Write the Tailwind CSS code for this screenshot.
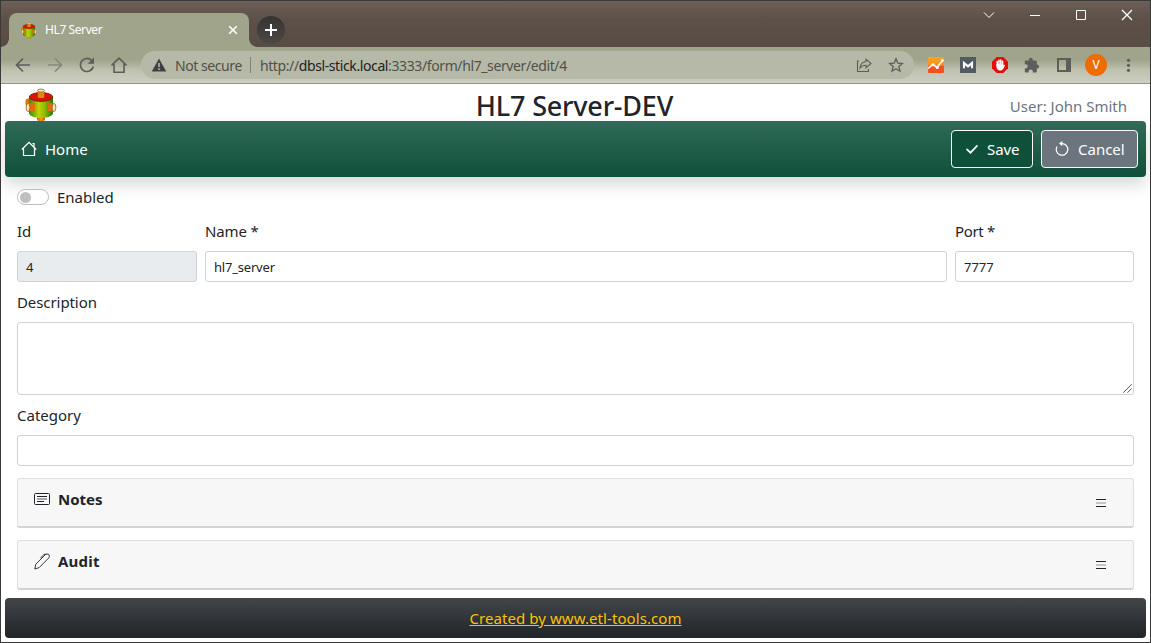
<!DOCTYPE html>
<html lang="en">
<head>
<meta charset="utf-8">
<title>HL7 Server</title>
<script src="https://cdn.jsdelivr.net/npm/@tailwindcss/browser@4"></script>
</head>
<body class="w-[1151px] h-[643px] overflow-hidden bg-white font-['Noto_Sans','Open_Sans',sans-serif] text-[15px] text-[#212529]">
<svg width="0" height="0" class="absolute">
  <defs>
    <linearGradient id="drum"><stop offset="0" stop-color="#348a06"/><stop offset=".4" stop-color="#bfd400"/><stop offset=".65" stop-color="#8fbb08"/><stop offset="1" stop-color="#1c7a08"/></linearGradient>
    <linearGradient id="pipe"><stop offset="0" stop-color="#c96a05"/><stop offset=".5" stop-color="#f0a020"/><stop offset="1" stop-color="#c35a08"/></linearGradient>
    <linearGradient id="ana" x2="0" y2="1"><stop offset="0" stop-color="#f9a51d"/><stop offset=".5" stop-color="#f9901d"/><stop offset=".6" stop-color="#f4511e"/></linearGradient>
    <symbol id="logo" viewBox="0 0 32 34">
      <rect x="12" y="27" width="8" height="6" rx="2" fill="url(#pipe)"/>
      <rect x="0.500" y="10.500" width="6" height="8" rx="2.500" fill="#d9780b"/>
      <path d="M4 9v16c0 2.700 5 5 12 5s12-2.300 12-5V9z" fill="url(#drum)"/>
      <ellipse cx="16" cy="9" rx="11.800" ry="4.400" fill="#dc1405" stroke="#7c1c04" stroke-width=".9"/>
      <rect x="12.800" y="3" width="6.500" height="7" rx="1.500" fill="#dc8a12"/>
      <ellipse cx="16" cy="2.600" rx="3.600" ry="1.500" fill="#f8e7b3" stroke="#8a6a20" stroke-width=".8"/>
      <path d="M3 15.500l7-1v8.500l-7 .5z" fill="#dc6f0c"/>
      <ellipse cx="3" cy="19.500" rx="1.900" ry="4" fill="#f8e7b3" stroke="#8a5a20" stroke-width=".8"/>
      <path d="M23 14.500l6 1v8l-6-.5z" fill="#dc6f0c"/>
      <ellipse cx="29" cy="19.500" rx="1.900" ry="4" fill="#f8e7b3" stroke="#8a5a20" stroke-width=".8"/>
    </symbol>
  </defs>
</svg>
<div class="w-full h-full border border-[#3b3a3a] flex flex-col">

  <!-- Tab strip -->
  <div class="h-[46px] shrink-0 flex items-end justify-between bg-linear-to-b from-[#6b5f58] via-[#5d5049] via-40% to-[#594c45]">
    <div class="flex items-end">
      <div class="size-2 bg-[radial-gradient(circle_at_0_0,#594c45_7.500px,#9fa48b_8px)]"></div>
      <div class="w-[240px] h-[34px] rounded-t-lg bg-[#9fa48b] flex items-center pl-3 pr-[11px]">
        <svg class="w-4 h-[17px]"><use href="#logo"/></svg>
        <span class="ml-2 text-[12px] tracking-[-0.4px] text-white whitespace-nowrap">HL7 Server</span>
        <svg class="ml-auto" width="10" height="10" viewBox="0 0 10 10" stroke="#fff" stroke-width="1.600"><path d="M1.200 1.200l7.600 7.600M8.800 1.200l-7.600 7.600"/></svg>
      </div>
      <div class="size-2 bg-[radial-gradient(circle_at_100%_0,#594c45_7.500px,#9fa48b_8px)]"></div>
      <div class="size-7 mb-[3px] rounded-full bg-linear-to-b from-[#363432] to-[#4b4845] flex items-center justify-center">
        <svg width="12" height="12" viewBox="0 0 12 12" stroke="#fff" stroke-width="2"><path d="M6 0v12M0 6h12"/></svg>
      </div>
    </div>
    <div class="h-full flex items-start pt-2 pr-[17px] gap-[34px]">
      <svg width="12" height="12" viewBox="0 0 12 12" fill="none" stroke="#fff"><path d="M1 3.500l5 5 5-5"/></svg>
      <svg width="12" height="12" viewBox="0 0 12 12" stroke="#fff"><path d="M1 6.500h10"/></svg>
      <svg width="12" height="12" viewBox="0 0 12 12" fill="none" stroke="#fff"><path d="M1.500 1.500h9v9h-9z"/></svg>
      <svg width="12" height="12" viewBox="0 0 12 12" stroke="#fff" stroke-width="1.300"><path d="M1 1l10 10M11 1L1 11"/></svg>
    </div>
  </div>

  <!-- Toolbar -->
  <div class="h-[37px] shrink-0 flex items-center pl-[14px] pr-[15px] border-b border-[#92948a] bg-linear-to-b from-[#9fa48b] from-35% via-[#bfc2b0] via-65% to-[#cdcfc2]">
    <div class="flex gap-4 text-[#5c5e5b]">
      <svg width="16" height="16" viewBox="0 0 16 16" fill="none" stroke="currentColor" stroke-width="1.700"><path d="M15 8H2M8 1.500L1.500 8 8 14.500"/></svg>
      <svg width="16" height="16" viewBox="0 0 16 16" fill="none" stroke="#86897c" stroke-width="1.700"><path d="M1 8h13M8 1.500L14.500 8 8 14.500"/></svg>
      <svg width="16" height="16" viewBox="0 0 16 16" fill="none" stroke="currentColor" stroke-width="1.700"><path d="M14.300 9.500A6.500 6.500 0 1 1 12.600 3.400L14 4.800"/><path d="M15 0.500v6.300H8.700z" fill="currentColor" stroke="none"/></svg>
      <svg width="16" height="16" viewBox="0 0 16 16" fill="none" stroke="currentColor" stroke-width="1.600"><path d="M.5 8.500L8 1.200l7.500 7.300M3 7v8.200h10V7"/></svg>
    </div>
    <div class="ml-[14px] w-[773px] h-7 rounded-full bg-[#b6b9a7] flex items-center pl-[10px] pr-[10px] text-[14px] text-[#4f514a]">
      <svg width="16" height="14" viewBox="0 0 16 14"><path d="M8 0.500l7.300 13H.7z" fill="#3f4144"/><path d="M8 5v4M8 10.300v1.700" stroke="#b6b9a7" stroke-width="1.600"/></svg>
      <span class="ml-2 tracking-[-0.43px] whitespace-nowrap">Not secure</span>
      <span class="ml-2 w-px h-4 bg-[#7e8175]"></span>
      <span class="ml-[9px] tracking-[-0.39px] whitespace-nowrap">http://<span class="text-[#222]">dbsl-stick.local</span>:3333/form/hl7_server/edit/4</span>
      <svg class="ml-auto" width="16" height="16" viewBox="0 0 16 16" fill="none" stroke="#5c5e5b" stroke-width="1.100"><path d="M3 4H1.500v10.500h11V12"/><path d="M10 2.200L15 6.500l-5 4.200V8.300C7.500 8.300 5.500 9 4 11c.3-3.500 2.300-6 6-6.500z"/></svg>
      <svg class="ml-4" width="16" height="16" viewBox="0 0 16 16" fill="none" stroke="#5c5e5b" stroke-width="1.300"><path d="M8 1.800l1.800 4.300 4.700.4-3.600 3.100 1.100 4.600L8 11.700l-4 2.500 1.100-4.600-3.600-3.100 4.700-.4z"/></svg>
    </div>
    <div class="ml-[14px] flex items-center gap-4">
      <svg width="16" height="16" viewBox="0 0 16 16"><rect width="16" height="16" rx="1" fill="url(#ana)"/><path d="M0 11.500L5 7.500l4 3L15 3" fill="none" stroke="#fff" stroke-width="1.600"/><g fill="#fff"><circle cx="5" cy="7.800" r="1.500"/><circle cx="9.300" cy="10.500" r="1.500"/><circle cx="14.300" cy="3.500" r="1.500"/></g></svg>
      <svg width="16" height="16" viewBox="0 0 16 16"><rect width="16" height="16" fill="#515c60"/><path d="M4 11.200V6l4 3.300L12 6v5.200" fill="none" stroke="#fff" stroke-width="2.100"/></svg>
      <svg width="16" height="16" viewBox="0 0 16 16"><path d="M4.700 0h6.600L16 4.700v6.600L11.300 16H4.700L0 11.300V4.700z" fill="#e40d0d"/><path d="M5.200 8.500V4.500M7 8V3.200M8.800 8V3M10.600 8V4.200" stroke="#fff" stroke-width="1.500" stroke-linecap="round"/><path d="M4.450 7h6.900v1.500l.8-.7.900.6-2 3.800Q10 13.500 8.200 13.500C5.600 13.500 4.450 11.800 4.450 9.500z" fill="#fff"/></svg>
      <svg width="16" height="16" viewBox="0 0 16 16" fill="#5c5e5b"><path d="M12.800 7.500V4.700c0-.7-.6-1.300-1.300-1.300H8.700V2.600a1.900 1.900 0 0 0-3.800 0v.8H2.100C1.400 3.400.8 4 .8 4.700v2.500h.9a2 2 0 0 1 0 4.200H.8v2.800c0 .7.600 1.300 1.300 1.300h2.500v-.9a2 2 0 0 1 4.200 0v.9h2.700c.7 0 1.300-.6 1.300-1.300v-2.800h.7a2 2 0 0 0 0-3.900z"/></svg>
      <svg width="16" height="16" viewBox="0 0 16 16"><path fill-rule="evenodd" d="M1 1h14v14H1zM3 3v10h7V3z" fill="#5c5e5b"/></svg>
    </div>
    <div class="ml-[13px] size-[22px] rounded-full bg-[#ef6c00] text-white text-[12px] leading-none flex items-center justify-center">V</div>
    <svg class="ml-auto" width="14" height="16" viewBox="0 0 14 16" fill="#5c5e5b"><circle cx="7.500" cy="3.300" r="1.600"/><circle cx="7.500" cy="8.300" r="1.600"/><circle cx="7.500" cy="13.300" r="1.600"/></svg>
  </div>

  <!-- Page -->
  <div class="px-1 flex flex-col">
    <header class="h-[37px] grid grid-cols-3 items-center pl-[19px] pr-[19px]">
      <svg class="w-8 h-[34px] mt-0.5 ml-px"><use href="#logo"/></svg>
      <h1 class="text-center text-[27px] leading-[34px] font-medium tracking-[-0.2px] pt-[5px] pr-0.5 whitespace-nowrap">HL7 Server-DEV</h1>
      <div class="text-right text-[#6c757d] pt-[5px]">User: John Smith</div>
    </header>
    <nav class="h-14 rounded-[4px] bg-linear-to-b from-[#2f6b58] to-[#0f503b] shadow-[0_8px_16px_rgba(0,0,0,0.15)] flex items-center pl-4 pr-2 text-white">
      <svg width="16" height="16" viewBox="0 0 16 16" fill="none" stroke="#fff" stroke-width="1.200"><path d="M.8 8.500L8 1.300l7.200 7.200M2.500 7v7.500h11V7M11.500 2.500h1.500V6"/></svg>
      <span class="ml-2">Home</span>
      <button class="ml-auto w-[82px] h-[38px] rounded-[4px] border border-white bg-[#0f503b] flex items-center pl-3 whitespace-nowrap">
        <svg width="16" height="16" viewBox="0 0 16 16" fill="none" stroke="#fff" stroke-width="1.700" stroke-linecap="round"><path d="M3 8.300l3.500 3.400L13 4.800"/></svg>
        <span class="ml-[7px] tracking-[-0.1px]">Save</span>
      </button>
      <button class="ml-2 w-[97px] h-[38px] rounded-[4px] border border-white bg-[#6c757d] flex items-center pl-3 whitespace-nowrap">
        <svg width="16" height="16" viewBox="0 0 16 16" fill="none" stroke="#fff" stroke-width="1.200"><path d="M8 2.600a5.800 5.800 0 1 1-5 2.900"/><path d="M8.300 0v5.200L5 2.600z" fill="#fff" stroke="none"/></svg>
        <span class="ml-2">Cancel</span>
      </button>
    </nav>

    <main class="px-3 pt-2 flex flex-col">
      <label class="h-6 flex items-center">
        <span class="w-8 h-4 rounded-full border border-[#bfbfbf] bg-white flex items-center pl-[2px]"><span class="size-[11px] rounded-full bg-[#bfbfbf]"></span></span>
        <span class="ml-2">Enabled</span>
      </label>
      <div class="mt-[10px] grid grid-cols-[180px_742px_179px] gap-x-2">
        <span class="h-6 leading-6">Id</span>
        <span class="h-6 leading-6 tracking-[-0.15px]">Name *</span>
        <span class="h-6 leading-6 tracking-[-0.35px]">Port *</span>
        <div class="mt-2 h-[31px] rounded-[3px] border border-[#ced4da] bg-[#e9ecef] px-2 text-[13px] leading-[30px]">4</div>
        <div class="mt-2 h-[31px] rounded-[3px] border border-[#ced4da] px-2 text-[13px] leading-[30px] tracking-[-0.2px]">hl7_server</div>
        <div class="mt-2 h-[31px] rounded-[3px] border border-[#ced4da] px-2 text-[13px] leading-[30px]">7777</div>
      </div>
      <span class="mt-2 h-6 leading-6 tracking-[-0.08px]">Description</span>
      <div class="mt-2 h-[73px] rounded-[3px] border border-[#ced4da] flex items-end justify-end p-px">
        <svg width="9" height="9" viewBox="0 0 9 9" stroke="#444" stroke-width=".9"><path d="M.3 8.700L8.700.3M4.500 8.700l4.200-4.200"/></svg>
      </div>
      <span class="mt-2 h-6 leading-6">Category</span>
      <div class="mt-2 h-[31px] rounded-[3px] border border-[#ced4da]"></div>
      <section class="mt-3 h-[50px] rounded-[3px] border border-[#dfdfdf] border-b-2 border-b-[#d4d4d4] bg-[#f7f7f7] flex items-start pl-4 pr-[26px]">
        <svg class="mt-[12px]" width="16" height="16" viewBox="0 0 16 16" fill="none" stroke="#212529"><rect x=".5" y="2.500" width="15" height="11" rx="1"/><path d="M3 5.500h10M3 10.500h7"/><path d="M3 8h10" stroke="#aaa" stroke-width="2"/></svg>
        <span class="ml-2 mt-[8px] h-6 leading-6 font-bold">Notes</span>
        <svg class="ml-auto mt-[19px]" width="12" height="12" viewBox="0 0 12 12"><path d="M1 1.500h10M1 8.500h10" stroke="#212529"/><path d="M1 5h10" stroke="#c4c4c4" stroke-width="2"/></svg>
      </section>
      <section class="mt-3 h-[50px] rounded-[3px] border border-[#dfdfdf] border-b-2 border-b-[#d4d4d4] bg-[#f7f7f7] flex items-start pl-4 pr-[26px]">
        <svg class="mt-[12px]" width="16" height="17" viewBox="0 0 16 17" fill="none" stroke="#212529" stroke-width=".9"><path d="M.8 16l1-4.800L11.500 1.500Q13.200.3 14.800 1.600q1.300 1.500 0 3.300L5.200 14.600zM6.500 5.200L10 1.300h2.500"/></svg>
        <span class="ml-2 mt-[8px] h-6 leading-6 font-bold tracking-[0.2px]">Audit</span>
        <svg class="ml-auto mt-[19px]" width="12" height="12" viewBox="0 0 12 12"><path d="M1 1.500h10M1 8.500h10" stroke="#212529"/><path d="M1 5h10" stroke="#c4c4c4" stroke-width="2"/></svg>
      </section>
    </main>

    <footer class="mt-2 h-10 rounded-[4px] bg-linear-to-b from-[#424649] to-[#212529] flex items-center justify-center text-[#ffc107]">
      <a class="underline tracking-[0.07px]">Created by www.etl-tools.com</a>
    </footer>
  </div>
</div>
</body>
</html>
